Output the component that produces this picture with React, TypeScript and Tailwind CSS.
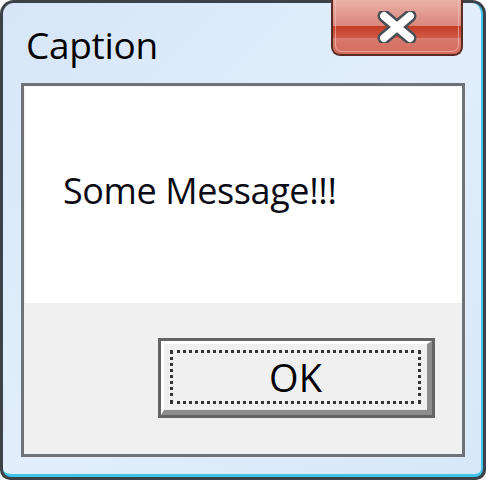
import React from "react";

function CloseX() {
  return (
    <svg width="40" height="32" viewBox="0 0 40 32">
      <path d="M7 5 L33 27 M33 5 L7 27" stroke="#4a4f57" strokeWidth="13" strokeLinecap="round" />
      <path d="M7 5 L33 27 M33 5 L7 27" stroke="#ffffff" strokeWidth="8" strokeLinecap="round" />
    </svg>
  );
}

export default function App() {
  return (
    <div className="w-[486px] h-[480px] bg-white">
      <div className="relative w-[486px] h-[480px] rounded-t-[14px] rounded-b-[10px] bg-[#3d4248] p-[3px]">
        <div className="flex flex-col h-full rounded-t-[11px] rounded-b-[8px] bg-gradient-to-br from-[#d6e6f7] via-[#e2eefb] to-[#d8e7f7] border-b-[3px] border-r-[2px] border-[#3fc4ec]">
          <div className="h-[80px] flex items-center pl-[23px] pt-[2px]">
            <span className="text-[37px] leading-none text-black tracking-[-0.3px]" style={{ fontFamily: '"Open Sans", "Noto Sans", sans-serif' }}>
              Caption
            </span>
          </div>
          <div className="ml-[18px] w-[444px] h-[374px] border-[3px] border-[#6f7276] flex flex-col">
            <div className="h-[217px] bg-white border-t border-l border-[#f4f4f4] pl-[38px] pt-[86px]">
              <span className="text-[36px] leading-none text-[#0a0a14] tracking-[-0.4px]" style={{ fontFamily: '"Open Sans", "Noto Sans", sans-serif' }}>
                Some Message!!!
              </span>
            </div>
            <div className="flex-1 bg-[#f0f0f0] flex justify-end items-start pt-[35px] pr-[27px]">
              <div className="w-[277px] h-[80px] border-[3px] border-[#646464] bg-[#f0f0f0]">
                <div className="w-full h-full border-t-[3px] border-l-[3px] border-b-[5px] border-r-[5px] border-t-white border-l-white border-b-[#8c8c8c] border-r-[#8c8c8c] p-[6px]">
                  <div className="w-full h-full border-[3px] border-dotted border-[#333] flex items-center justify-center">
                    <span className="text-[38px] leading-none text-black" style={{ fontFamily: '"Open Sans", "Noto Sans", sans-serif' }}>
                      OK
                    </span>
                  </div>
                </div>
              </div>
            </div>
          </div>
        </div>
        <div className="absolute left-[331px] top-0 w-[132px] h-[56px] rounded-b-[9px] border-[2px] border-t-0 border-[#5b2c24] overflow-hidden bg-gradient-to-b from-[#eab1a6] via-[#d9847a] to-[#d56c5d] flex items-center justify-center">
          <div className="absolute left-0 right-0 top-[26px] h-[12px] bg-gradient-to-b from-[#c53a22] to-[#cf5a48]" />
          <div className="absolute left-[2px] right-[2px] top-0 bottom-[2px] rounded-b-[7px] border border-t-0 border-[#f2c4bb]/60" />
          <div className="relative">
            <CloseX />
          </div>
        </div>
      </div>
    </div>
  );
}
